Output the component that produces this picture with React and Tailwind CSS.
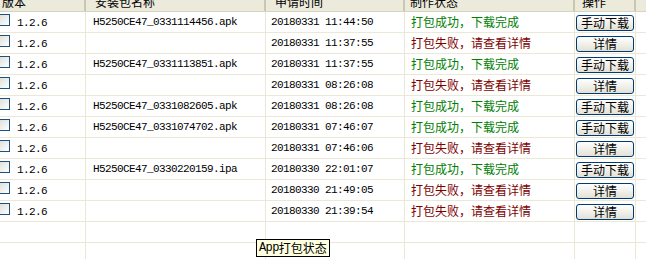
import React from 'react';

const rows = [
  { file: 'H5250CE47_0331114456.apk', time: '20180331 11:44:50', ok: true },
  { file: '', time: '20180331 11:37:55', ok: false },
  { file: 'H5250CE47_0331113851.apk', time: '20180331 11:37:55', ok: true },
  { file: '', time: '20180331 08:26:08', ok: false },
  { file: 'H5250CE47_0331082605.apk', time: '20180331 08:26:08', ok: true },
  { file: 'H5250CE47_0331074702.apk', time: '20180331 07:46:07', ok: true },
  { file: '', time: '20180331 07:46:06', ok: false },
  { file: 'H5250CE47_0330220159.ipa', time: '20180330 22:01:07', ok: true },
  { file: '', time: '20180330 21:49:05', ok: false },
  { file: '', time: '20180330 21:39:54', ok: false },
];

const mono = { fontFamily: '"Liberation Mono", "DejaVu Sans Mono", monospace' };
const cjk = { fontFamily: '"Noto Sans CJK SC", "Liberation Sans", sans-serif' };

const cols = 'grid grid-cols-[86px_180px_139px_170px_61px_1fr]';

const XpButton = ({ children }) => (
  <button
    type="button"
    className="mt-[3px] ml-[1px] flex h-[16px] w-[58px] items-center justify-center rounded-[3px] border border-[#003c74] bg-gradient-to-b from-white to-[#e3e1d6] text-[12px] leading-none text-black"
    style={cjk}
  >
    {children}
  </button>
);

const Row = ({ file, time, ok, empty }) => (
  <div className={`${cols} h-[21px] text-[11px]`}>
    <div className="flex items-start border-r border-b border-[#ebe8d6]">
      {!empty && (
        <>
          <span className="ml-[-3px] mt-[2px] h-[12px] w-[13px] border border-[#1c5180] bg-gradient-to-br from-[#dcdcd7] to-white" />
          <span className="ml-[7px] mt-[3px] tracking-[-0.6px] text-black" style={mono}>1.2.6</span>
        </>
      )}
    </div>
    <div className="flex items-center border-r border-b border-[#ebe8d6] pl-[7px] tracking-[-0.6px] text-black" style={mono}>
      {file}
    </div>
    <div className="flex items-center border-r border-b border-[#ebe8d6] pl-[5px] tracking-[-0.6px] text-black" style={mono}>
      {time}
    </div>
    <div
      className={`flex items-center border-r border-b border-[#ebe8d6] pl-[6px] text-[12px] ${ok ? 'text-[#008000]' : 'text-[#800000]'}`}
      style={cjk}
    >
      {empty ? '' : ok ? '打包成功，下载完成' : '打包失败，请查看详情'}
    </div>
    <div className="border-r border-b border-[#ebe8d6]">
      {!empty && <XpButton>{ok ? '手动下载' : '详情'}</XpButton>}
    </div>
    <div className="border-b border-[#ebe8d6]" />
  </div>
);

const HeaderCell = ({ label, pad, last }) => (
  <div
    className={`flex h-full items-center ${last ? '' : 'border-r-2 border-r-[#c9c6b3]'} text-[12px] text-black`}
    style={{ ...cjk, paddingLeft: pad }}
  >
    {label}
  </div>
);

export default function App() {
  return (
    <div className="relative h-[259px] w-[646px] overflow-hidden bg-white">
      <div className="mt-[-8px]">
        <div className={`${cols} h-[20px] border-b border-[#d6d3c2] bg-[#ebeadb]`}>
          <HeaderCell label="版本" pad={2} />
          <HeaderCell label="安装包名称" pad={9} />
          <HeaderCell label="申请时间" pad={9} />
          <HeaderCell label="制作状态" pad={5} />
          <HeaderCell label="操作" pad={7} />
          <HeaderCell label="" pad={0} last />
        </div>
        {rows.map((r, i) => (
          <Row key={i} {...r} />
        ))}
        <Row empty />
        <Row empty />
      </div>

      {/* tooltip */}
      <div
        className="absolute left-[256px] top-[239px] flex h-[18px] items-center border border-black bg-[#ffffe1] px-[2px] text-[12px] text-black"
        style={cjk}
      >
        <span className="tracking-[-0.6px]" style={mono}>App</span>
        <span>打包状态</span>
      </div>
    </div>
  );
}
